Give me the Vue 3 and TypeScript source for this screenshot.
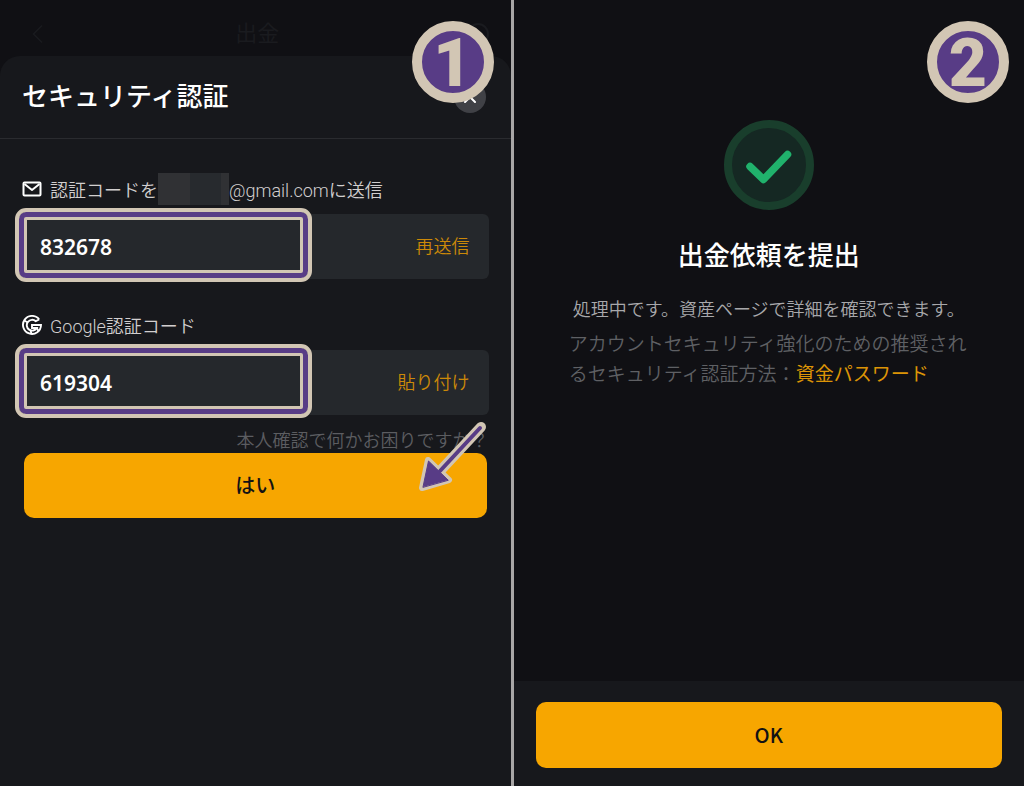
<script setup lang="ts">
import { ref } from 'vue'

const emailCode = ref('832678')
const googleCode = ref('619304')
</script>

<template>
  <main class="guide">
    <section class="panel verify">
      <header class="navbar">
        <button class="icon-button" type="button" aria-label="戻る">
          <svg width="20" height="20" viewBox="0 0 20 20" fill="none" stroke="currentColor" stroke-width="1.500"><path d="M14 1.500 5.500 10l8.500 8.500" /></svg>
        </button>
        <span class="navbar-title">出金</span>
        <button class="icon-button" type="button" aria-label="ヘルプ">
          <svg width="24" height="24" viewBox="0 0 24 24" fill="none" stroke="currentColor" stroke-width="2"><circle cx="12" cy="12" r="10" /></svg>
        </button>
      </header>

      <div class="sheet">
        <div class="sheet-head">
          <h1>セキュリティ認証</h1>
          <button class="close" type="button" aria-label="閉じる">
            <svg width="12" height="12" viewBox="0 0 12 12" stroke="currentColor" stroke-width="2" stroke-linecap="round"><path d="M1 1l10 10M11 1 1 11" /></svg>
          </button>
        </div>

        <form class="form" @submit.prevent>
          <div class="field">
            <label for="email-code">
              <svg class="label-icon" viewBox="0 0 20 20" fill="none" stroke="currentColor" stroke-width="2" stroke-linejoin="round"><rect x="1.500" y="3.500" width="17" height="13" rx="1" /><path d="m2.500 5 7.500 6 7.500-6" /></svg>
              <span>認証コードを</span><span class="mask"></span><span>@gmail.comに送信</span>
            </label>
            <div class="row">
              <input id="email-code" v-model="emailCode" type="text" inputmode="numeric" />
              <button class="action" type="button">再送信</button>
              <span class="highlight"></span>
            </div>
          </div>

          <div class="field">
            <label for="google-code">
              <svg class="label-icon" viewBox="0 0 20 20" fill="none" stroke="currentColor" stroke-width="1.900"><path d="M17.200 4.500A9 9 0 1 0 19 10H10v3h4.800a5.400 5.400 0 1 1-1-6.800L17.200 4.500" /><path d="M2.200 5.500 5.800 7.500M8.500 15.200 9.500 18.800M14.800 13 16.500 16" /></svg>
              <span>Google認証コード</span>
            </label>
            <div class="row">
              <input id="google-code" v-model="googleCode" type="text" inputmode="numeric" />
              <button class="action" type="button">貼り付け</button>
              <span class="highlight"></span>
            </div>
          </div>

          <a class="trouble" href="#">本人確認で何かお困りですか？</a>
          <div class="confirm">
            <button class="primary" type="submit">はい</button>
            <svg class="arrow" viewBox="0 0 68 72" aria-hidden="true">
              <g stroke-linejoin="round" stroke-linecap="round">
                <path d="M63 7 22 51" fill="none" stroke="#d2c6b4" stroke-width="10" />
                <path d="M4 68 10 40 31 60Z" fill="#d2c6b4" stroke="#d2c6b4" stroke-width="6" />
                <path d="M62 8 22 51" fill="none" stroke="#583c86" stroke-width="4" />
                <path d="M5 67 10.500 41 30 60Z" fill="#583c86" stroke="#583c86" stroke-width="1" />
              </g>
            </svg>
          </div>
        </form>
      </div>
      <span class="badge one">1</span>
    </section>

    <div class="divider"></div>

    <section class="panel done">
      <div class="result">
        <svg class="check" viewBox="0 0 90 90" fill="none">
          <circle cx="45" cy="45" r="41" fill="#152823" stroke="#193e2c" stroke-width="8" />
          <path d="M26 46.500 39.500 59.500 63.500 34.500" stroke="#20b26c" stroke-width="7.500" stroke-linecap="round" stroke-linejoin="round" />
        </svg>
        <h2>出金依頼を提出</h2>
        <p class="status">処理中です。資産ページで詳細を確認できます。</p>
        <p class="advice">アカウントセキュリティ強化のための推奨されるセキュリティ認証方法：<a href="#">資金パスワード</a></p>
      </div>
      <footer>
        <button class="primary" type="button">OK</button>
      </footer>
      <span class="badge two">2</span>
    </section>
  </main>
</template>

<style>
body {
  margin: 0;
  background: #101014;
}
</style>

<style scoped>
.guide {
  display: grid;
  grid-template-columns: minmax(0, 1fr) 3px minmax(0, 1fr);
  min-height: 100vh;
  font-family: Roboto, "Noto Sans CJK JP", sans-serif;
  color: #fff;
}
h1, h2, p { margin: 0; }
button {
  border: 0;
  padding: 0;
  font: inherit;
  cursor: pointer;
}
a { text-decoration: none; }
svg { display: block; flex: none; }
.panel {
  position: relative;
  display: flex;
  flex-direction: column;
  background: #101014;
}
.divider { background: #a8a6a6; }

.navbar {
  display: flex;
  align-items: center;
  justify-content: space-between;
  height: 56px;
  padding: 12px 20px 0 24px;
  box-sizing: border-box;
  color: #1a1b1f;
}
.navbar-title {
  font-size: 22px;
  line-height: 24px;
}
.icon-button { background: none; color: inherit; }
.icon-button:first-child { padding-left: 4px; }

.sheet {
  flex: 1;
  border-radius: 20px 20px 0 0;
  background: #17181c;
}
.sheet-head {
  display: flex;
  align-items: center;
  justify-content: space-between;
  height: 83px;
  padding: 0 25px 0 22px;
  box-sizing: border-box;
  border-bottom: 1px solid #2a2b2f;
}
h1, h2 {
  font-size: 26px;
  line-height: 36px;
  font-weight: 500;
}
.close {
  display: grid;
  place-items: center;
  width: 32px;
  height: 32px;
  border-radius: 50%;
  background: #404146;
  color: #fff;
}
.form {
  display: flex;
  flex-direction: column;
  padding: 34px 22px 24px;
}
.field { margin-bottom: 30px; }
.field + .field { margin-bottom: 10px; }
label {
  display: flex;
  align-items: center;
  height: 32px;
  margin-bottom: 9px;
  font-size: 18px;
  font-weight: 350;
  color: #d2cfcf;
  white-space: nowrap;
}
.label-icon {
  width: 20px;
  height: 20px;
  margin-right: 8px;
  color: #fff;
}
.mask {
  width: 71px;
  height: 32px;
  background: linear-gradient(90deg, #303134 45%, #272a2e 45%, #272a2e 89%, #303134 89%);
}
.row {
  position: relative;
  display: flex;
  align-items: center;
  height: 65px;
  padding: 0 19px 0 18px;
  border-radius: 6px;
  background: #25282c;
}
input {
  flex: 1;
  min-width: 0;
  height: 44px;
  padding: 0;
  border: 0;
  outline: 0;
  background: none;
  color: #fff;
  font: 600 21px "Noto Sans", sans-serif;
}
.action {
  background: none;
  color: #cc8908;
  font-size: 18px;
  font-weight: 350;
  line-height: 24px;
}
.highlight {
  position: absolute;
  inset: -6px 177px -3px -7px;
  border: 4px solid #d2c6b4;
  border-radius: 11px;
  box-shadow: inset 0 0 0 5px #583c86, inset 0 0 0 8px #d2c6b4;
  pointer-events: none;
}
.trouble {
  align-self: flex-end;
  margin-top: 2px;
  margin-bottom: -2px;
  font-size: 18px;
  font-weight: 350;
  line-height: 28px;
  color: #5c5d61;
}
.confirm {
  position: relative;
  margin: 0 2px;
}
.primary {
  display: block;
  width: 100%;
  height: 65px;
  padding-bottom: 2px;
  border-radius: 10px;
  background: #f7a600;
  color: #121214;
  font-family: "Noto Sans CJK JP", sans-serif;
  font-size: 20px;
  font-weight: 500;
}
.arrow {
  position: absolute;
  right: 1px;
  top: -33px;
  width: 68px;
  height: 72px;
  pointer-events: none;
}

.badge {
  position: absolute;
  top: 21px;
  width: 82px;
  height: 82px;
  box-sizing: border-box;
  border: 10px solid #d2c6b4;
  border-radius: 50%;
  background: #583c86;
  color: #d2c6b4;
  font-family: Roboto, sans-serif;
  text-align: center;
  line-height: 66px;
  font-size: 66px;
  font-weight: 900;
}
.one { right: 17px; }
.two { right: 15px; }

.result {
  flex: 1;
  display: flex;
  flex-direction: column;
  align-items: center;
  padding: 120px 24px 24px;
}
.check { width: 90px; height: 90px; }
h2 { margin-top: 28px; }
.status {
  margin-top: 22px;
  font-size: 18px;
  font-weight: 350;
  line-height: 28px;
  color: #a8a8ab;
}
.advice {
  max-width: 400px;
  margin-top: 6px;
  font-size: 19px;
  font-weight: 350;
  line-height: 30px;
  color: #5f6064;
}
.advice a {
  color: #dc9406;
  font-weight: 400;
}
footer {
  padding: 21px 22px 18px;
  background: #17181c;
}
footer .primary { height: 66px; }
</style>
